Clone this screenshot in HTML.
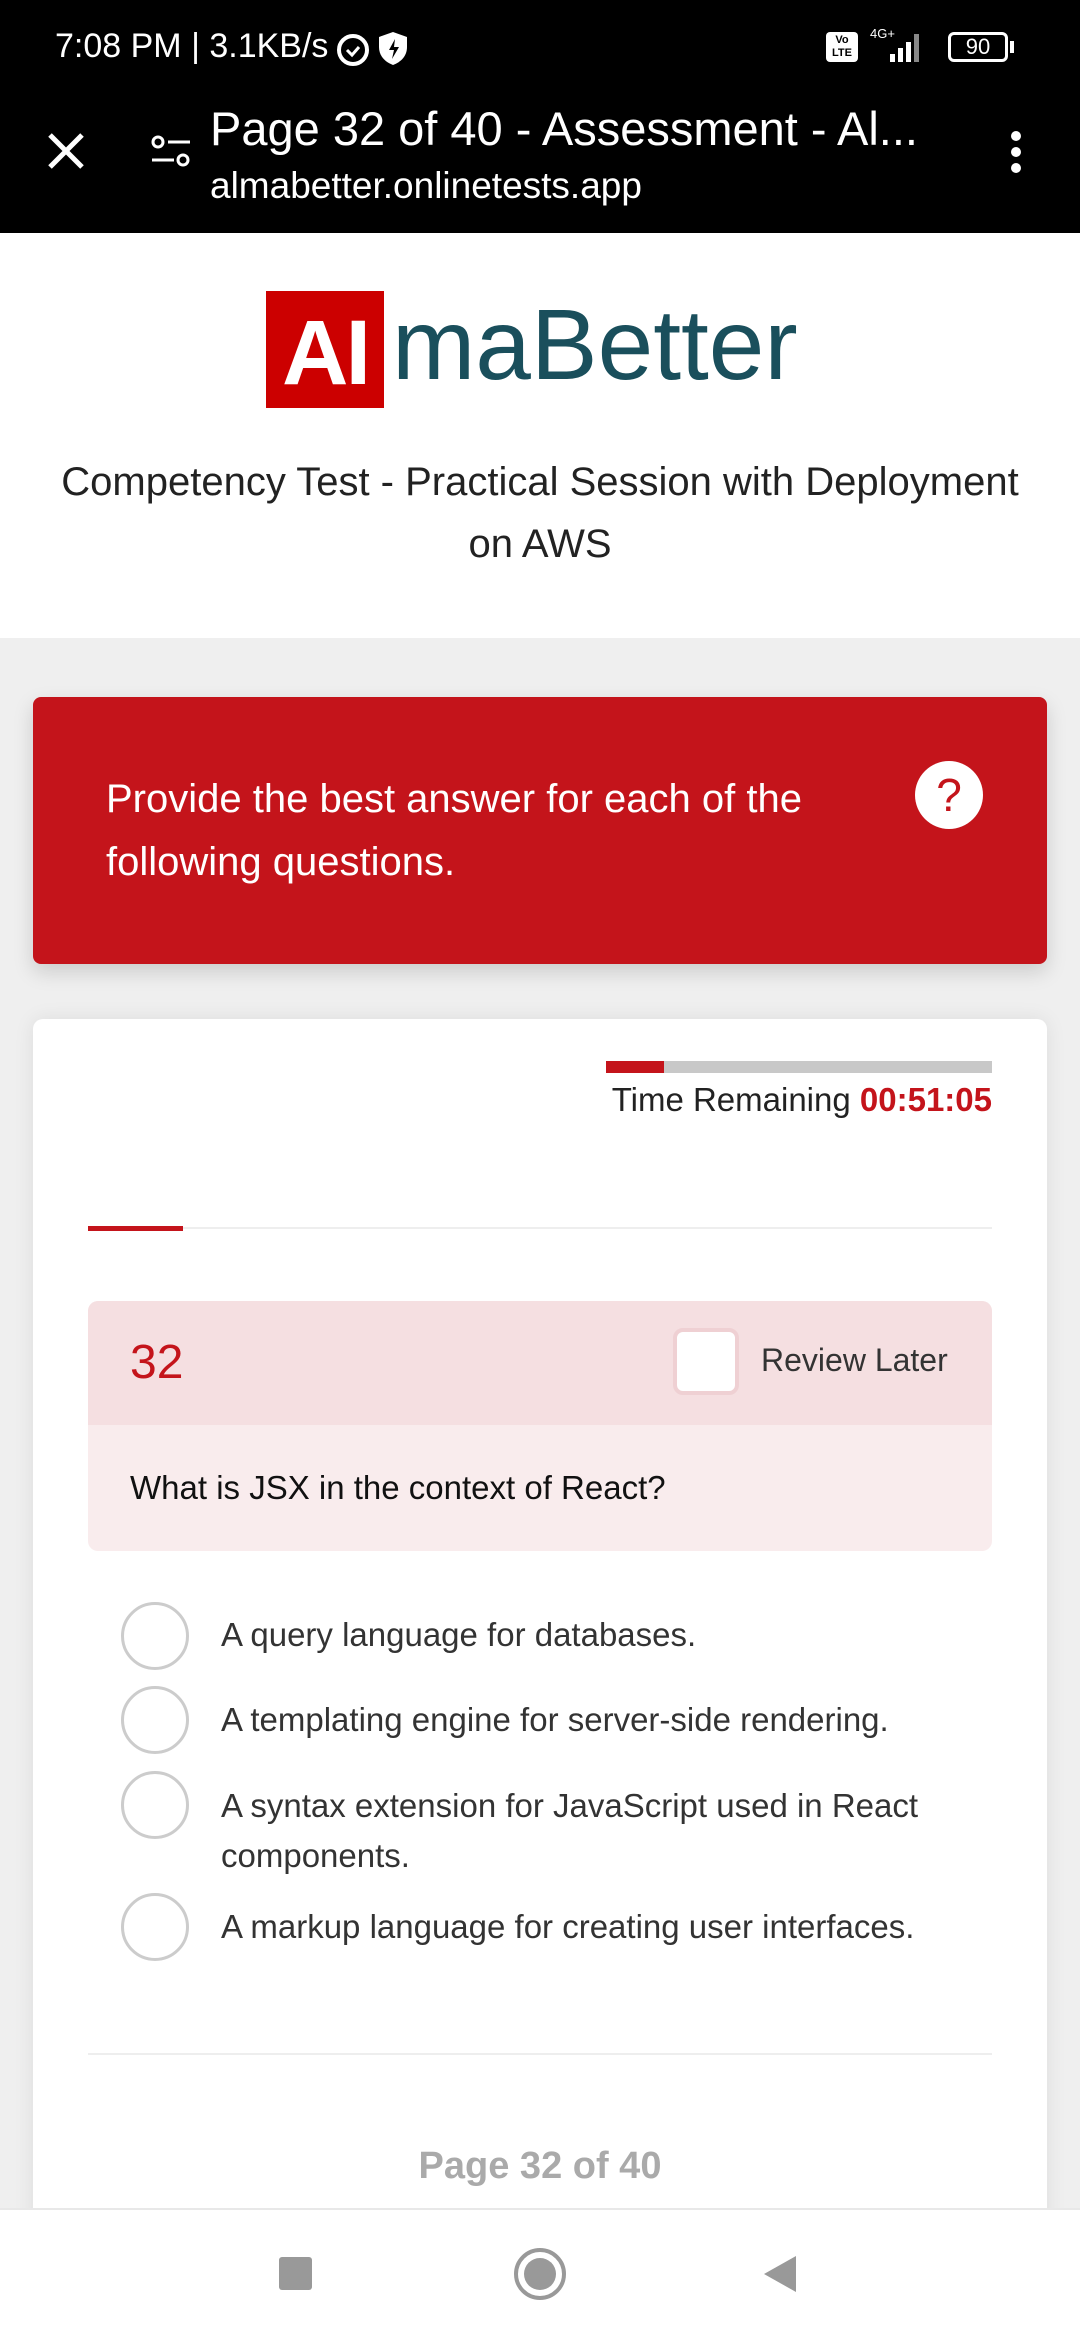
<!DOCTYPE html>
<html style="overflow:hidden;width:1080px;height:2340px"><head><meta charset="utf-8"><style>
*{margin:0;padding:0;box-sizing:border-box}
body{width:1080px;height:2340px;overflow:hidden;background:#efefef;font-family:"Liberation Sans",sans-serif;position:relative}
.a{position:absolute;white-space:nowrap}
</style></head><body>
<div class="a" style="left:0;top:0;width:1080px;height:233px;background:#000"></div>
<div class="a" style="left:55px;top:27px;color:#fff;font-size:34px">7:08 PM | 3.1KB/s</div>
<svg class="a" style="left:333px;top:26px" width="90" height="44"><circle cx="20" cy="24" r="14" fill="none" stroke="#fff" stroke-width="4"/><path d="M14 24l5 5 7-8" stroke="#fff" stroke-width="3" fill="none"/><path d="M60 6l14 5v10c0 9-6 15-14 18-8-3-14-9-14-18V11z" fill="#fff"/><path d="M62 13l-6 11h5l-2 9 7-12h-5z" fill="#000"/></svg>
<div class="a" style="left:826px;top:32px;width:32px;height:30px;background:#fff;border-radius:4px;color:#000;font-size:11px;font-weight:bold;text-align:center;line-height:13px;padding-top:2px">Vo<br>LTE</div>
<div class="a" style="left:870px;top:26px;color:#fff;font-size:13px">4G+</div>
<svg class="a" style="left:868px;top:28px" width="70" height="38"><rect x="22" y="26" width="5" height="8" fill="#fff"/><rect x="30" y="20" width="5" height="14" fill="#fff"/><rect x="38" y="14" width="5" height="20" fill="#fff"/><rect x="46" y="6" width="5" height="28" fill="#888"/></svg>
<div class="a" style="left:948px;top:32px;width:60px;height:30px;border:3px solid #fff;border-radius:6px;color:#fff;font-size:22px;text-align:center;line-height:24px">90</div>
<div class="a" style="left:1010px;top:41px;width:4px;height:12px;background:#fff"></div>
<svg class="a" style="left:46px;top:131px" width="40" height="40"><path d="M4 4L36 36M36 4L4 36" stroke="#fff" stroke-width="5"/></svg>
<svg class="a" style="left:150px;top:134px" width="44" height="36"><circle cx="8" cy="8" r="5" fill="none" stroke="#fff" stroke-width="3"/><path d="M18 8h22M2 26h22" stroke="#fff" stroke-width="3"/><circle cx="33" cy="26" r="5" fill="none" stroke="#fff" stroke-width="3"/></svg>
<div class="a" style="left:210px;top:101px;color:#fff;font-size:47px">Page 32 of 40 - Assessment - Al...</div>
<div class="a" style="left:210px;top:165px;color:#fff;font-size:37px">almabetter.onlinetests.app</div>
<svg class="a" style="left:1006px;top:128px" width="20" height="50"><circle cx="10" cy="8" r="5" fill="#fff"/><circle cx="10" cy="24" r="5" fill="#fff"/><circle cx="10" cy="40" r="5" fill="#fff"/></svg>
<div class="a" style="left:0;top:233px;width:1080px;height:405px;background:#fff"></div>
<div class="a" style="left:266px;top:291px;width:118px;height:117px;background:#cc0000;color:#fff;font-size:92px;font-weight:bold;text-align:center;line-height:124px;letter-spacing:-3px">AI</div>
<div class="a" style="left:392px;top:280px;color:#1a4f5c;font-size:100px;line-height:130px">maBetter</div>
<div class="a" style="left:0;width:1080px;top:460px;text-align:center;font-size:40px;color:#222">Competency Test - Practical Session with Deployment</div>
<div class="a" style="left:0;width:1080px;top:522px;text-align:center;font-size:40px;color:#222">on AWS</div>
<div class="a" style="left:33px;top:697px;width:1014px;height:267px;background:#c4141b;border-radius:8px;box-shadow:0 8px 20px rgba(0,0,0,.15)"></div>
<div class="a" style="left:106px;top:768px;color:#fff;font-size:40px;line-height:63px">Provide the best answer for each of the<br>following questions.</div>
<div class="a" style="left:915px;top:761px;width:68px;height:68px;border-radius:50%;background:#fff;color:#c4141b;font-size:46px;text-align:center;line-height:68px">?</div>
<div class="a" style="left:33px;top:1019px;width:1014px;height:1300px;background:#fff;border-radius:10px;box-shadow:0 0 20px rgba(0,0,0,.08)"></div>
<div class="a" style="left:606px;top:1061px;width:386px;height:12px;background:#c8c8c8"></div>
<div class="a" style="left:606px;top:1061px;width:58px;height:12px;background:#c4141b"></div>
<div class="a" style="right:88px;top:1081px;font-size:33px;color:#222">Time Remaining <b style="color:#c4141b">00:51:05</b></div>
<div class="a" style="left:88px;top:1227px;width:904px;height:2px;background:#eee"></div>
<div class="a" style="left:88px;top:1226px;width:95px;height:5px;background:#c4141b"></div>
<div class="a" style="left:88px;top:1301px;width:904px;height:250px;background:#f9eced;border-radius:10px"></div>
<div class="a" style="left:88px;top:1301px;width:904px;height:124px;background:#f5dfe1;border-radius:10px 10px 0 0"></div>
<div class="a" style="left:130px;top:1335px;font-size:48px;color:#c4141b">32</div>
<div class="a" style="left:673px;top:1328px;width:66px;height:67px;background:#fff;border:4px solid #efd0d3;border-radius:10px"></div>
<div class="a" style="left:761px;top:1342px;font-size:32px;color:#333">Review Later</div>
<div class="a" style="left:130px;top:1469px;font-size:33px;color:#111">What is JSX in the context of React?</div>
<div class="a" style="left:121px;top:1602px;width:68px;height:68px;border:3px solid #ccc;border-radius:50%"></div>
<div class="a" style="left:121px;top:1686px;width:68px;height:68px;border:3px solid #ccc;border-radius:50%"></div>
<div class="a" style="left:121px;top:1771px;width:68px;height:68px;border:3px solid #ccc;border-radius:50%"></div>
<div class="a" style="left:121px;top:1893px;width:68px;height:68px;border:3px solid #ccc;border-radius:50%"></div>
<div class="a" style="left:221px;top:1616px;font-size:33px;color:#333">A query language for databases.</div>
<div class="a" style="left:221px;top:1701px;font-size:33px;color:#333">A templating engine for server-side rendering.</div>
<div class="a" style="left:221px;top:1781px;font-size:33px;color:#333;line-height:50px">A syntax extension for JavaScript used in React<br>components.</div>
<div class="a" style="left:221px;top:1908px;font-size:33px;color:#333">A markup language for creating user interfaces.</div>
<div class="a" style="left:88px;top:2053px;width:904px;height:2px;background:#eee"></div>
<div class="a" style="left:0;width:1080px;top:2145px;text-align:center;font-size:38px;font-weight:bold;color:#aaa">Page 32 of 40</div>
<div class="a" style="left:0;top:2208px;width:1080px;height:132px;background:#fff;border-top:2px solid #e8e8e8"></div>
<div class="a" style="left:279px;top:2257px;width:33px;height:33px;background:#999;border-radius:3px"></div>
<div class="a" style="left:514px;top:2248px;width:52px;height:52px;border:4px solid #999;border-radius:50%"></div>
<div class="a" style="left:524px;top:2258px;width:32px;height:32px;background:#999;border-radius:50%"></div>
<svg class="a" style="left:760px;top:2254px" width="40" height="40"><path d="M36 2V38L4 20z" fill="#999"/></svg>
</body></html>
